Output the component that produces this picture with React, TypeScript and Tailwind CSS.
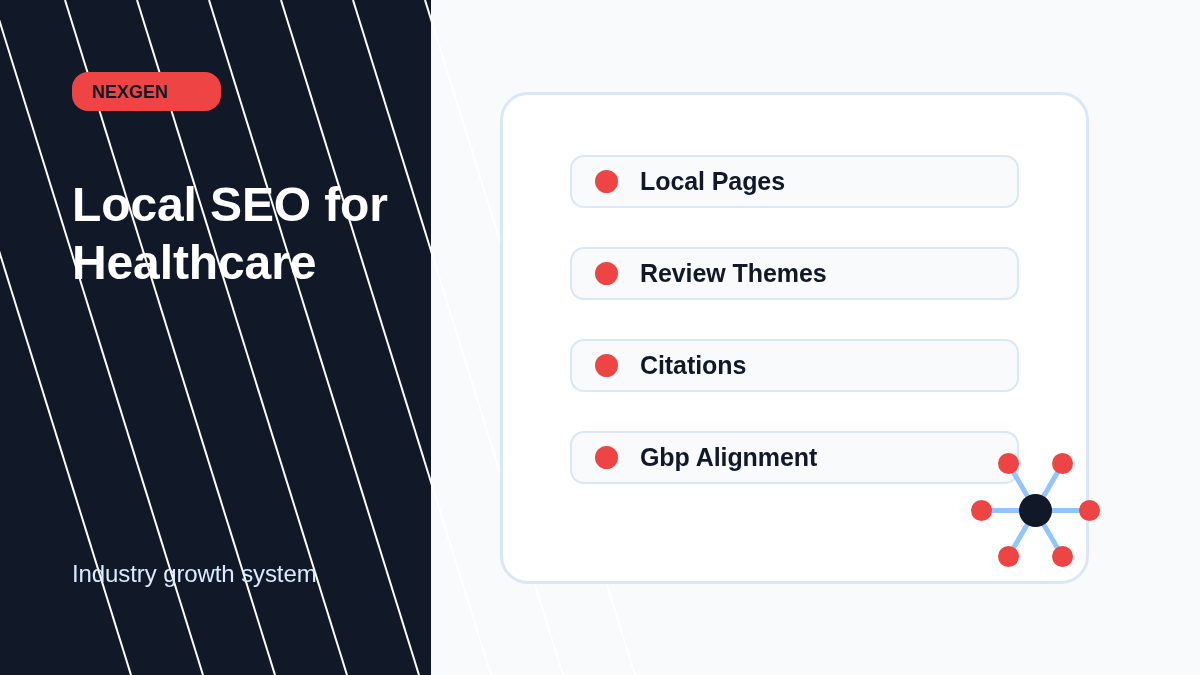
const items = ['Local Pages', 'Review Themes', 'Citations', 'Gbp Alignment']

// top crossing of each diagonal, 72px apart
const stripes = [-79, -7, 65, 137, 209, 281, 353, 425]

const spokes = [
  [981.5, 510.5],
  [1089.5, 510.5],
  [1008.5, 463.5],
  [1062.5, 463.5],
  [1008.5, 556.5],
  [1062.5, 556.5],
]

export default function App() {
  return (
    <div className="relative flex h-[675px] w-[1200px] overflow-hidden bg-[#f8fafc] font-['Liberation_Sans',Arial,sans-serif]">
      <aside className="flex h-full w-[431px] shrink-0 flex-col items-start bg-[#111827] pl-[72px] pt-[72px]">
        <div className="relative z-10 flex h-[39px] w-[149px] items-center rounded-[16px] bg-[#ef4444] pl-5 pt-0.5 text-[18px] font-bold text-[#111827] will-change-transform">
          NEXGEN
        </div>
        <h1 className="relative z-10 mt-[65px] text-[48px] font-bold leading-[58px] tracking-[-0.12px] text-white will-change-transform">
          Local SEO for
          <br />
          Healthcare
        </h1>
        <p className="relative z-10 mt-[268px] text-[24px] leading-[28px] tracking-[-0.1px] text-[#dbeafe] will-change-transform">
          Industry growth system
        </p>
      </aside>

      <svg className="absolute left-0 top-0 z-0" width="1200" height="675" viewBox="0 0 1200 675" fill="none">
        {stripes.map((x) => (
          <line key={x} x1={x} y1={0} x2={x + 210} y2={675} stroke="#ffffff" strokeWidth={2} />
        ))}
      </svg>

      <main className="relative z-10 ml-[69px] mt-[92px] h-[492px] w-[589px] rounded-[28px] border-[3px] border-[#dbe7f3] bg-white pl-[67px] pt-[60px]">
        <ul className="flex w-[449px] flex-col gap-[39px]">
          {items.map((item) => (
            <li
              key={item}
              className="flex h-[53px] items-center gap-[22px] rounded-[14px] border-2 border-[#dbe7f3] bg-[#f8fafc] pl-[23px] text-[25px] font-bold tracking-[-0.08px] text-[#111827]"
            >
              <span className="h-[23px] w-[23px] shrink-0 rounded-full bg-[#ef4444]" />
              <span className="will-change-transform">{item}</span>
            </li>
          ))}
        </ul>
      </main>

      {/* hub graphic sits over the card's corner */}
      <svg className="absolute left-0 top-0 z-20" width="1200" height="675" viewBox="0 0 1200 675" fill="none">
        {spokes.map(([x, y]) => (
          <line key={`${x}-${y}`} x1={1035.5} y1={510.5} x2={x} y2={y} stroke="#93c5fd" strokeWidth={5} />
        ))}
        {spokes.map(([x, y]) => (
          <circle key={`${x}-${y}`} cx={x} cy={y} r={10.5} fill="#ef4444" />
        ))}
        <circle cx={1035.5} cy={510.5} r={16.5} fill="#111827" />
      </svg>
    </div>
  )
}
